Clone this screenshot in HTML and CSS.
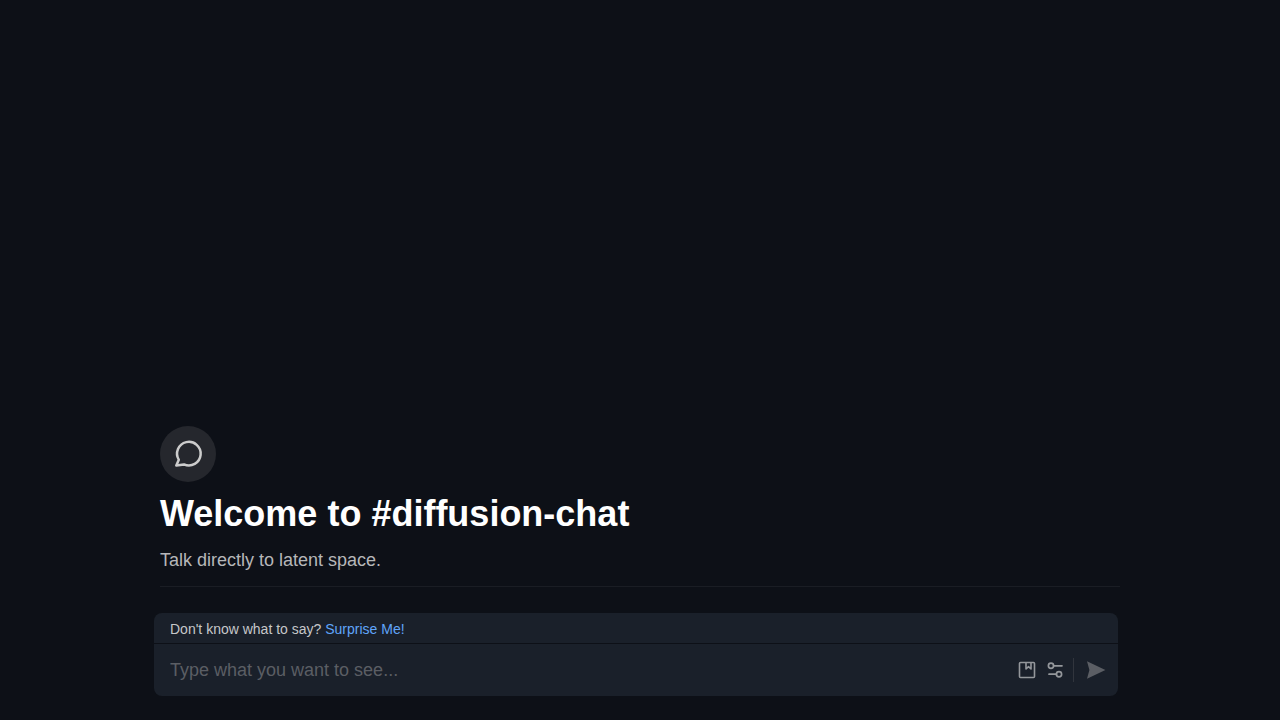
FILE: index.html
```html
<!DOCTYPE html>
<html lang="en">

<head>
    <meta charset="UTF-8" />
    <meta name="viewport" content="width=device-width, initial-scale=1.0" />
    <title>diffusion-chat</title>
    <link rel="stylesheet" href="styles.css">
</head>

<body>
    <main class="chat">
        <header class="welcome">
            <div class="avatar">
                <svg viewBox="0 0 32 32" width="32" height="32" fill="none" stroke="currentColor" stroke-width="2.5" stroke-linecap="round" stroke-linejoin="round" aria-hidden="true">
                    <path d="M4.3 27.6 6.8 21.8A11.8 11.8 0 1 1 12 26.4z" />
                </svg>
            </div>
            <h1>Welcome to #diffusion-chat</h1>
            <p>Talk directly to latent space.</p>
        </header>

        <form class="prompt">
            <div class="hint">
                Don't know what to say? <a href="#">Surprise Me!</a>
            </div>
            <div class="bar">
                <input type="text" placeholder="Type what you want to see..." aria-label="Prompt" />
                <div class="tools">
                    <button type="button" aria-label="Saved prompts">
                        <svg viewBox="0 0 20 20" width="20" height="20" fill="none" stroke="currentColor" stroke-width="1.6" stroke-linejoin="round" aria-hidden="true">
                            <rect x="2.5" y="2.5" width="15" height="15" rx="1" />
                            <path d="M9 2.5v6.5l2.5-2.3L14 9V2.5" />
                        </svg>
                    </button>
                    <button type="button" aria-label="Settings">
                        <svg viewBox="0 0 20 20" width="20" height="20" fill="none" stroke="currentColor" stroke-width="1.7" stroke-linecap="round" aria-hidden="true">
                            <circle cx="6" cy="5.8" r="2.6" />
                            <path d="M8.6 5.8H17M4 14.2h7.4" />
                            <circle cx="14" cy="14.2" r="2.6" />
                        </svg>
                    </button>
                </div>
                <button class="send" type="submit" aria-label="Send">
                    <svg viewBox="0 0 20 20" width="20" height="20" fill="currentColor" aria-hidden="true">
                        <path d="M1 1.2 19.4 10 1 18.8 3.4 10z" />
                    </svg>
                </button>
            </div>
        </form>
    </main>
</body>

</html>
```
FILE: styles.css
```css
:root {
    --bg: #0d1017;
    --panel: #1a202a;
    --line: #1a1d24;
    --link: #60a5fa;
}

* {
    margin: 0;
    padding: 0;
    box-sizing: border-box;
}

body {
    background: var(--bg);
    color: #fff;
    font-family: "Liberation Sans", Arial, sans-serif;
}

.chat {
    display: flex;
    flex-direction: column;
    justify-content: flex-end;
    gap: 26px;
    min-height: 100vh;
    padding: 24px 12.5%;
}

.welcome {
    display: flex;
    flex-direction: column;
    gap: 12px;
    padding-bottom: 12px;
    border-bottom: 1px solid var(--line);
}

.avatar {
    display: flex;
    align-items: center;
    justify-content: center;
    width: 56px;
    height: 56px;
    border-radius: 50%;
    background: #25272d;
    color: #ccc;
}

h1 {
    font-size: 36px;
    line-height: 40px;
}

.welcome p {
    font-size: 18px;
    line-height: 28px;
    color: #b6b7b9;
}

/* the prompt box sits slightly wider than the text column */
.prompt {
    margin: 0 2px 0 -6px;
    border-radius: 8px;
    background: var(--panel);
}

.hint {
    padding: 6px 16px 4px;
    border-bottom: 1px solid var(--bg);
    font-size: 14px;
    line-height: 20px;
    color: #c6c7c9;
}

.hint a {
    color: var(--link);
    text-decoration: none;
}

.bar {
    display: flex;
    align-items: center;
    gap: 12px;
    height: 52px;
    padding: 0 12px 0 16px;
}

.bar input {
    flex: 1;
    min-width: 0;
    border: 0;
    outline: 0;
    background: transparent;
    color: #fff;
    font: inherit;
    font-size: 18px;
    line-height: 28px;
}

.bar input::placeholder {
    color: #5b5e64;
}

.bar button {
    display: flex;
    border: 0;
    background: none;
    color: #94979b;
    cursor: pointer;
}

.tools {
    display: flex;
    align-items: center;
    gap: 8px;
    height: 24px;
    padding-right: 8px;
    border-right: 1px solid #31353d;
}

.bar .send {
    color: #5b5e64;
}
```
